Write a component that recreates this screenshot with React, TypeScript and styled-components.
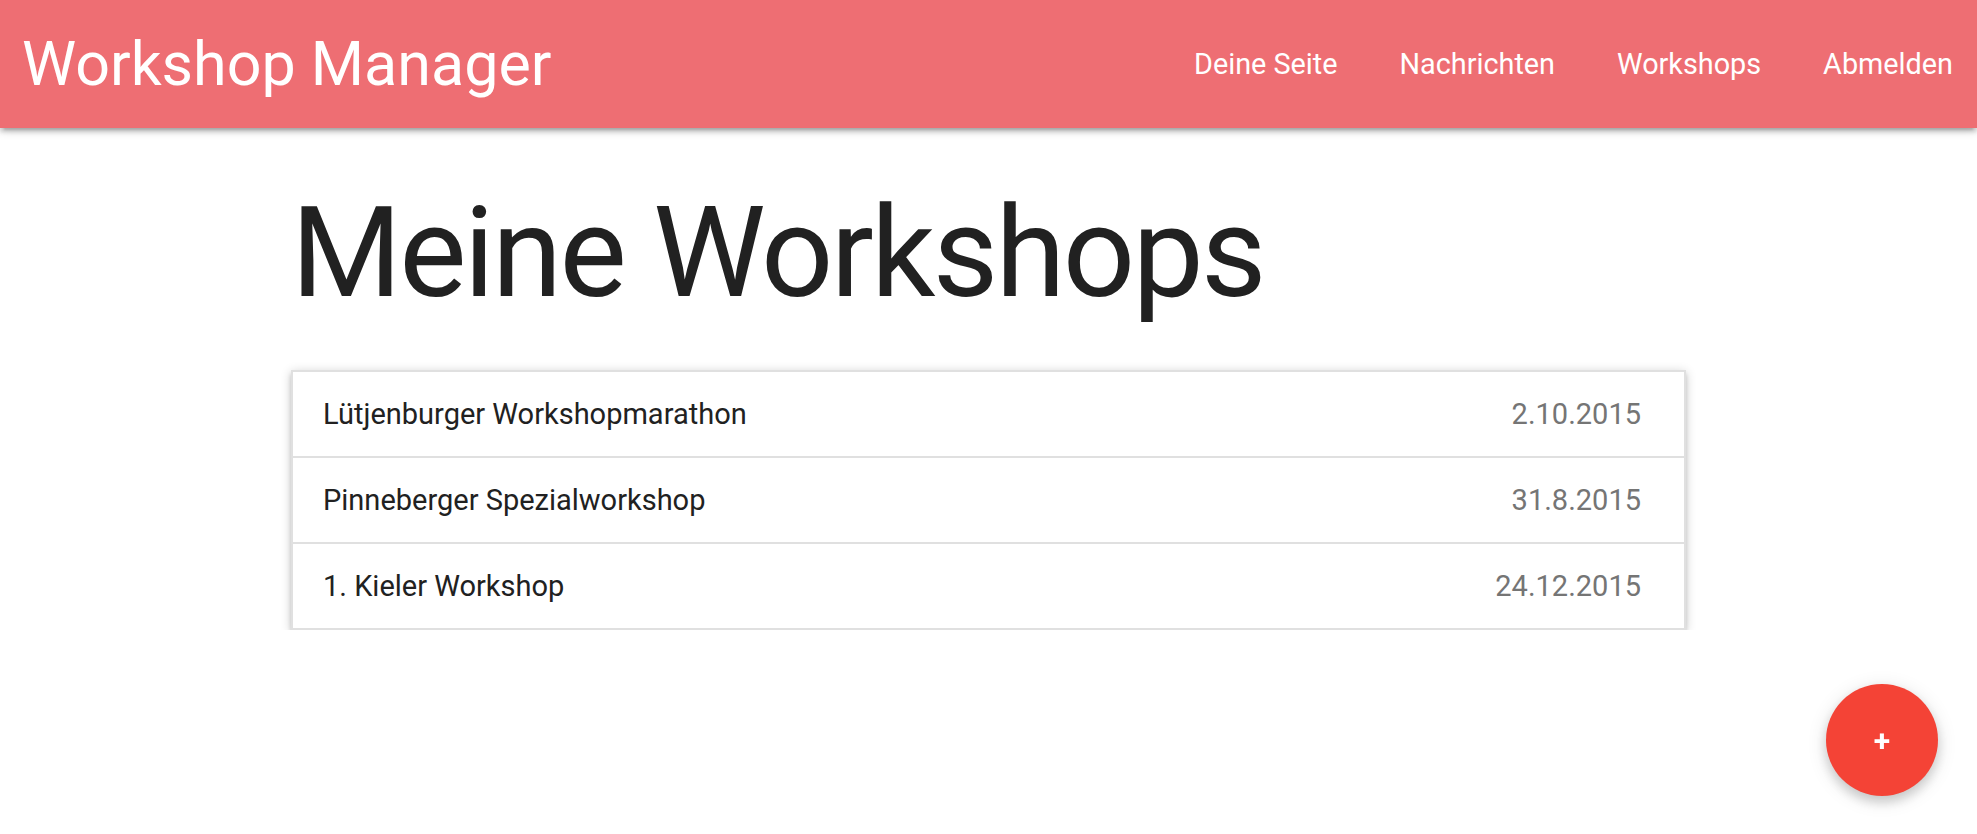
import React from "react";
import styled, { createGlobalStyle } from "styled-components";

const GlobalStyle = createGlobalStyle`
  html, body {
    margin: 0;
    padding: 0;
    background: #ffffff;
    font-family: Roboto, "Noto Sans", "Liberation Sans", sans-serif;
    overflow: hidden;
  }
  * { box-sizing: border-box; }
`;

const NavBar = styled.header`
  height: 128px;
  background: #ee6e73;
  display: flex;
  align-items: center;
  justify-content: space-between;
  padding: 0 24px 0 22px;
  color: #ffffff;
  box-shadow: 0 4px 4px 0 rgba(0, 0, 0, 0.14), 0 6px 2px -4px rgba(0, 0, 0, 0.12),
    0 2px 10px 0 rgba(0, 0, 0, 0.2);
  position: relative;
  z-index: 2;
`;

const Brand = styled.a`
  font-size: 61px;
  font-weight: 400;
  color: #ffffff;
  text-decoration: none;
  white-space: nowrap;
`;

const NavLinks = styled.nav`
  display: flex;
  align-items: center;
  gap: 62px;
`;

const NavLink = styled.a`
  font-size: 28.8px;
  color: #ffffff;
  text-decoration: none;
  white-space: nowrap;
`;

const Container = styled.main`
  width: 1395px;
  margin: 0 auto;
`;

const Title = styled.h1`
  font-size: 127px;
  font-weight: 400;
  line-height: 1.1;
  color: #212121;
  margin: 55px 0 47px 0;
  letter-spacing: -2.7px;
`;

const Collection = styled.ul`
  list-style: none;
  margin: 0;
  padding: 0;
  border: 2px solid #e0e0e0;
  background: #ffffff;
  box-shadow: 0 4px 4px 0 rgba(0, 0, 0, 0.14), 0 6px 2px -4px rgba(0, 0, 0, 0.12),
    0 2px 10px 0 rgba(0, 0, 0, 0.2);
`;

const Item = styled.li<{ $last?: boolean }>`
  height: ${(p) => (p.$last ? "84px" : "86px")};
  display: flex;
  align-items: center;
  justify-content: space-between;
  padding: 0 43px 0 30px;
  border-bottom: ${(p) => (p.$last ? "none" : "2px solid #e0e0e0")};
  font-size: 29px;
`;

const ItemName = styled.span`
  color: #212121;
`;

const ItemDate = styled.span`
  color: #757575;
`;

const Fab = styled.button`
  position: fixed;
  right: 39px;
  bottom: 38px;
  width: 112px;
  height: 112px;
  border-radius: 50%;
  border: none;
  background: #f44336;
  color: #ffffff;
  font-family: Roboto, "Liberation Sans", sans-serif;
  font-size: 30px;
  font-weight: 700;
  display: flex;
  align-items: center;
  justify-content: center;
  padding: 0;
  box-shadow: 0 6px 12px 0 rgba(0, 0, 0, 0.16), 0 4px 20px 0 rgba(0, 0, 0, 0.12);
  cursor: pointer;
`;

const workshops = [
  { name: "Lütjenburger Workshopmarathon", date: "2.10.2015" },
  { name: "Pinneberger Spezialworkshop", date: "31.8.2015" },
  { name: "1. Kieler Workshop", date: "24.12.2015" },
];

export default function App() {
  return (
    <>
      <GlobalStyle />
      <NavBar>
        <Brand href="#">Workshop Manager</Brand>
        <NavLinks>
          <NavLink href="#">Deine Seite</NavLink>
          <NavLink href="#">Nachrichten</NavLink>
          <NavLink href="#">Workshops</NavLink>
          <NavLink href="#">Abmelden</NavLink>
        </NavLinks>
      </NavBar>
      <Container>
        <Title>Meine Workshops</Title>
        <Collection>
          {workshops.map((w, i) => (
            <Item key={w.name} $last={i === workshops.length - 1}>
              <ItemName>{w.name}</ItemName>
              <ItemDate>{w.date}</ItemDate>
            </Item>
          ))}
        </Collection>
      </Container>
      <Fab aria-label="Workshop hinzufügen">+</Fab>
    </>
  );
}
